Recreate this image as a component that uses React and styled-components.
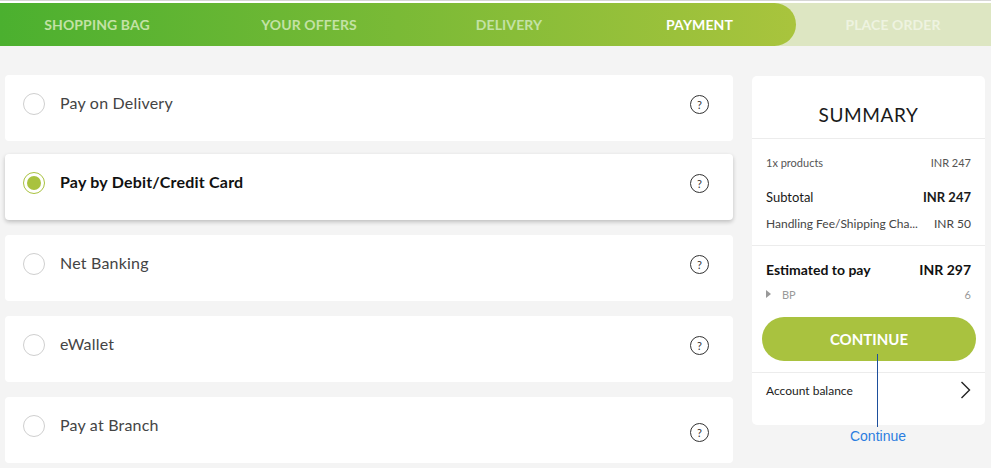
import styled, { createGlobalStyle } from "styled-components";

const Global = createGlobalStyle`
    body {
        margin : 0;
        background : #f4f4f4;
        font-family : "Lato", "Liberation Sans", sans-serif;
        color : #222;
    }
`;

const TopLine = styled.div`
    height : 3px;
    border-top : 1px solid #d6d6d6;
    box-sizing : border-box;
    background : #fff;
`;
const StepBar = styled.div`
    position : relative;
    height : 43px;
    background : #dde6c2;
    display : grid;
    grid-template-columns : 194px 230px 170px 201px 1fr;
`;
const StepFill = styled.div`
    position : absolute;
    left : 0;
    top : 0;
    bottom : 0;
    width : 796px;
    border-radius : 0 22px 22px 0;
    background : linear-gradient(to right, #4bb02f, #a9c43d);
`;
const Step = styled.div`
    position : relative;
    display : flex;
    align-items : center;
    justify-content : center;
    font-size : 14px;
    font-weight : 700;
    letter-spacing : 0.1px;
    color : ${p => p.$state === "active" ? "#fff" : p.$state === "todo" ? "#eef3e0" : "#c3e2a5"};
    padding-left : ${p => p.$shift || 0}px;
`;

const Main = styled.div`
    display : flex;
    gap : 19px;
    padding : 29px 6px 0 5px;
`;
const Methods = styled.div`
    flex : 1;
    display : flex;
    flex-direction : column;
    gap : 15px;
`;
const Method = styled.div`
    height : 66px;
    box-sizing : border-box;
    padding : 17px 24px 0 18px;
    background : #fff;
    border-radius : 4px;
    display : flex;
    align-items : flex-start;
    box-shadow : ${p => p.$selected ? "0 2px 4px rgba(0,0,0,0.22)" : "none"};
    &:first-child {
        margin-bottom : -2px;
    }
`;
const MethodRow = styled.div`
    flex : 1;
    height : 22px;
    margin-top : 1px;
    display : flex;
    align-items : center;
    gap : 15px;
`;
const Radio = styled.span`
    width : 22px;
    height : 22px;
    box-sizing : border-box;
    border-radius : 50%;
    border : 1px solid ${p => p.$checked ? "#a9c23f" : "#cfcfcf"};
    display : flex;
    align-items : center;
    justify-content : center;
    &::after {
        content : "";
        width : 14px;
        height : 14px;
        border-radius : 50%;
        background : ${p => p.$checked ? "#a9c23f" : "transparent"};
    }
`;
const MethodLabel = styled.span`
    flex : 1;
    margin-top : -3px;
    font-size : 16px;
    font-weight : ${p => p.$bold ? 700 : 400};
    letter-spacing : ${p => p.$bold ? "0.2px" : "0.2px"};
    color : ${p => p.$bold ? "#111" : "#444"};
`;
const Help = styled.span`
    width : 19px;
    height : 19px;
    box-sizing : border-box;
    border : 1px solid #333;
    border-radius : 50%;
    font-size : 11px;
    color : #333;
    display : flex;
    align-items : center;
    justify-content : center;
    margin-top : ${p => p.$drop || 0}px;
`;

const Side = styled.div`
    position : relative;
    width : 233px;
    padding-top : 1px;
`;
const Panel = styled.div`
    background : #fff;
    border-radius : 5px;
`;
const Title = styled.div`
    padding : 27px 0 11px;
    text-align : center;
    font-size : 19px;
    line-height : 24px;
    letter-spacing : 0.6px;
    color : #1a1a1a;
    border-bottom : 1px solid #ececec;
`;
const Section = styled.div`
    padding : ${p => p.$pad};
    border-bottom : ${p => p.$last ? "none" : "1px solid #ececec"};
`;
const Line = styled.div`
    display : flex;
    justify-content : space-between;
    align-items : center;
    gap : 8px;
    padding : 0 ${p => p.$inset || 14}px;
    margin-top : ${p => p.$mt || 0}px;
    height : ${p => p.$h || 16}px;
    font-size : ${p => p.$size || 11}px;
    font-weight : ${p => p.$bold ? 700 : 400};
    color : ${p => p.$color || "#555"};
`;
const Bp = styled.span`
    display : flex;
    align-items : center;
    gap : 11px;
    &::before {
        content : "";
        border-left : 5px solid #999;
        border-top : 4px solid transparent;
        border-bottom : 4px solid transparent;
    }
`;
const ContinueBtn = styled.button`
    display : block;
    width : 214px;
    height : 44px;
    margin : 15px auto 0;
    border : none;
    border-radius : 22px;
    background : #a9c23f;
    color : #fff;
    font-family : inherit;
    font-size : 15px;
    font-weight : 700;
    cursor : pointer;
`;
const Chevron = styled.svg`
    width : 11px;
    height : 18px;
`;
const Pointer = styled.div`
    position : absolute;
    left : 125px;
    top : 279px;
    width : 1px;
    height : 73px;
    background : #1d4f9c;
`;
const PointerLabel = styled.div`
    position : absolute;
    left : 126px;
    top : 353px;
    transform : translateX(-50%);
    font-size : 14px;
    color : #2b7de0;
    font-family : "Liberation Sans", sans-serif;
`;

const steps = [
    { label : "SHOPPING BAG", state : "done" },
    { label : "YOUR OFFERS", state : "done" },
    { label : "DELIVERY", state : "done" },
    { label : "PAYMENT", state : "active", shift : 10 },
    { label : "PLACE ORDER", state : "todo" },
];
const methods = [
    { label : "Pay on Delivery" },
    { label : "Pay by Debit/Credit Card", selected : true },
    { label : "Net Banking" },
    { label : "eWallet" },
    { label : "Pay at Branch", drop : 12 },
];

function App(){
    return (<>
        <Global />
        <TopLine />
        <StepBar>
            <StepFill />
            {steps.map( s =>
                <Step key={s.label} $state={s.state} $shift={s.shift}>{s.label}</Step>
            )}
        </StepBar>
        <Main>
            <Methods>
                {methods.map( m =>
                    <Method key={m.label} $selected={m.selected}>
                        <MethodRow>
                            <Radio $checked={m.selected} />
                            <MethodLabel $bold={m.selected}>{m.label}</MethodLabel>
                            <Help $drop={m.drop}>?</Help>
                        </MethodRow>
                    </Method>
                )}
            </Methods>
            <Side>
                <Panel>
                    <Title>SUMMARY</Title>
                    <Section $pad="15px 0 14px">
                        <Line><span>1x products</span><span>INR 247</span></Line>
                        <Line $mt={17} $h={20} $size={13} $color="#1a1a1a">
                            <span>Subtotal</span><b>INR 247</b>
                        </Line>
                        <Line $mt={8} $size={12} $color="#444">
                            <span>Handling Fee/Shipping Cha...</span><span>INR 50</span>
                        </Line>
                    </Section>
                    <Section $pad="13px 10px 11px">
                        <Line $inset={4} $h={20} $size={14} $bold $color="#111">
                            <span>Estimated to pay</span><span>INR 297</span>
                        </Line>
                        <Line $inset={4} $mt={7} $color="#999">
                            <Bp>BP</Bp><span>6</span>
                        </Line>
                        <ContinueBtn>CONTINUE</ContinueBtn>
                    </Section>
                    <Section $pad="9px 0 27px" $last>
                        <Line $size={12} $color="#222">
                            <span>Account balance</span>
                            <Chevron viewBox="0 0 11 18">
                                <polyline points="1.5,1 9.5,9 1.5,17" fill="none" stroke="#222" strokeWidth="1.4" />
                            </Chevron>
                        </Line>
                    </Section>
                </Panel>
                <Pointer />
                <PointerLabel>Continue</PointerLabel>
            </Side>
        </Main>
    </>)
}
export default App;
